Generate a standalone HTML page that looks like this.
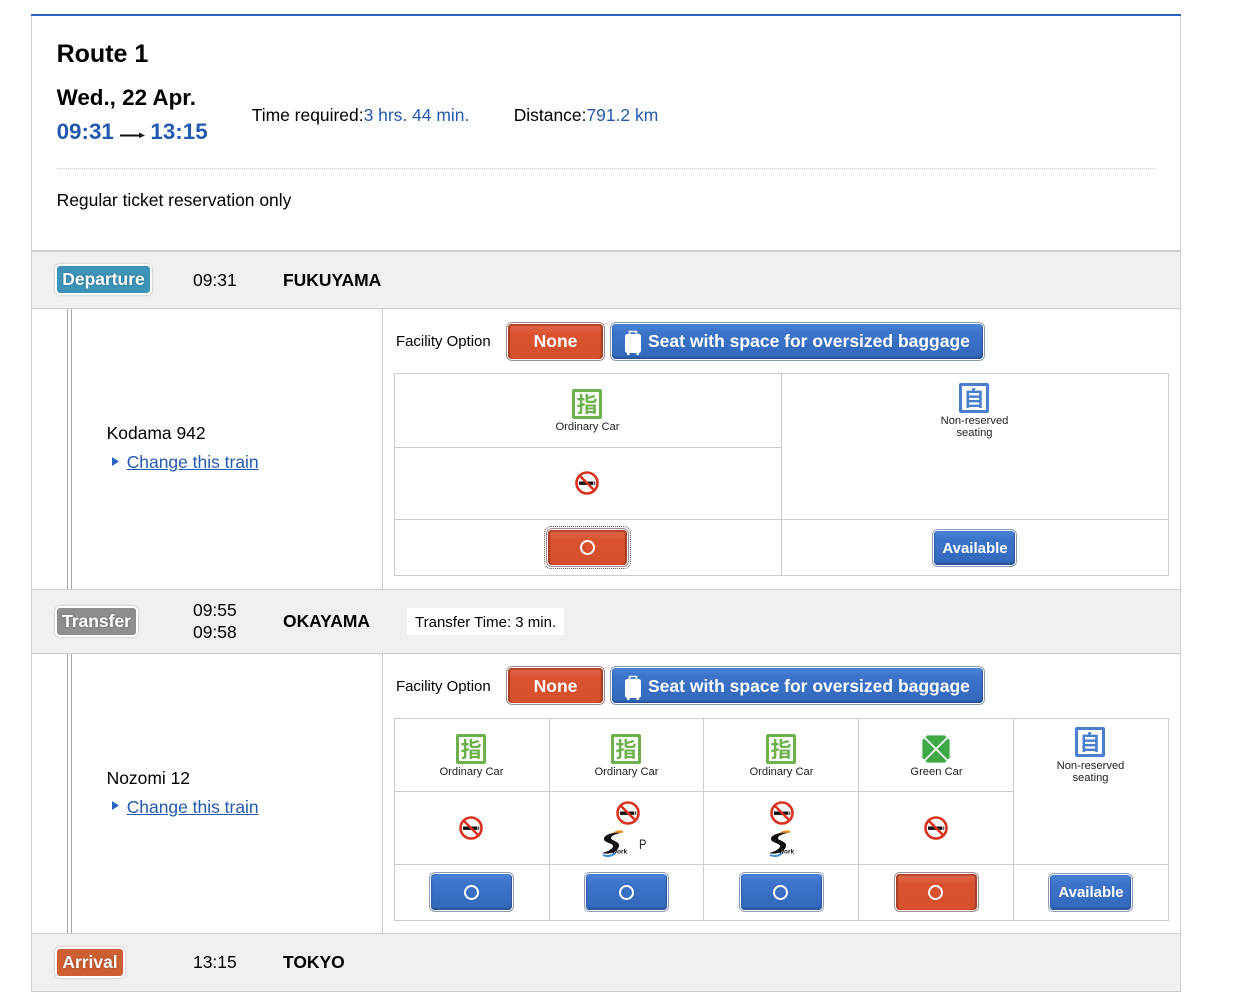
<!DOCTYPE html>
<html lang="en"><head><meta charset="utf-8"><title>Route 1</title>
<style>
html,body{margin:0;padding:0;background:#fff;width:1258px;height:1008px;overflow:hidden}
body{position:relative;font-family:"Liberation Sans","Noto Sans CJK JP",sans-serif;color:#000}
.a{position:absolute}
.t{position:absolute;white-space:nowrap;font-size:17.47px;line-height:22px}
.b{font-weight:bold}
.bl{color:#2459b0}
.line{position:absolute;background:#ccc}
.rail{position:absolute;background:#a8a8a8;width:1px}
.band{position:absolute;left:32px;width:1148px;background:#f0f0f0}
.badge{position:absolute;box-sizing:border-box;height:31px;border:2px solid #fff;border-radius:5px;color:#fff;font-weight:bold;font-size:17.47px;line-height:26px;text-align:center;box-shadow:0 0 2px rgba(0,0,0,.25);text-shadow:0 0 2px rgba(0,0,0,.3)}
.btn{position:absolute;box-sizing:border-box;border-radius:6px;border:1px solid #8a9bb5;padding:1px;background:#fff}
.btn>div{width:100%;height:100%;box-sizing:border-box;border-radius:4px;color:#fff;font-weight:bold;text-align:center;position:relative}
.btn.blue>div{background:linear-gradient(#4a82da,#3d74ca 25%,#3168bb);box-shadow:inset -1px -2px 1px #2a5598,inset 1px 0 1px #2f60ad}
.btn.red{border-color:#a08c88}
.btn.red>div{background:linear-gradient(#e2694d,#d9522f 30%,#d6502d);box-shadow:inset 2px 0 1px #a83d22,inset -2px 0 1px #a83d22,inset 0 2px 1px #b3492f}
.o{position:absolute;left:50%;top:50%;margin:-8px 0 0 -8px;border:2px solid #fff;border-radius:50%;box-sizing:content-box;width:11px;height:11px}
.cap{position:absolute;font-size:11.2px;line-height:12px;text-align:center;color:#222;white-space:nowrap;transform:translateX(-50%)}
.ic{position:absolute;box-sizing:border-box;width:30px;height:30px;border:3px solid;border-radius:2px;text-align:center;font-size:21px;font-weight:bold;line-height:24px;font-family:"Noto Sans CJK JP",sans-serif}
.g{color:#6db14d;border-color:#6db14d}
.n{color:#4a7fcf;border-color:#4a7fcf}
.bt{font-size:17.5px;line-height:35px}
.av{font-size:15px;line-height:35px}
</style></head><body>

<!-- outer frame -->
<div class="line" style="left:31px;top:14px;width:1px;height:978px"></div>
<div class="line" style="left:1180px;top:14px;width:1px;height:978px"></div>
<div class="a" style="left:31px;top:14px;width:1150px;height:2px;background:#2a62c0"></div>

<!-- header -->
<div class="t b" style="left:56.6px;top:39px;font-size:25px;line-height:30px">Route 1</div>
<div class="t b" style="left:56.6px;top:84px;font-size:22.4px;line-height:28px">Wed., 22 Apr.</div>
<div class="t b bl" style="left:56.6px;top:118px;font-size:22.4px;line-height:28px">09:31</div>
<svg class="a" style="left:120px;top:131px" width="25" height="8"><path d="M0 4.5H20" stroke="#111" stroke-width="2"/><path d="M19 1.5L25 4.5L19 7Z" fill="#111"/></svg>
<div class="t b bl" style="left:150.4px;top:118px;font-size:22.4px;line-height:28px">13:15</div>
<div class="t" style="left:251.7px;top:104px">Time required:<span class="bl">3 hrs. 44 min.</span></div>
<div class="t" style="left:513.7px;top:104px">Distance:<span class="bl">791.2 km</span></div>
<div class="a" style="left:57px;top:168px;width:1098px;border-top:1px dotted #ccc"></div>
<div class="t" style="left:56.6px;top:189px">Regular ticket reservation only</div>

<!-- departure band -->
<div class="band" style="top:250px;height:58px;border-top:2px solid #ccc;box-sizing:border-box"></div>
<div class="line" style="left:32px;top:308px;width:1148px;height:1px"></div>
<div class="badge" style="left:55px;top:264px;width:97px;background:#3d94b8">Departure</div>
<div class="t" style="left:193px;top:269px">09:31</div>
<div class="t b" style="left:283px;top:268.5px">FUKUYAMA</div>

<!-- section 1 -->
<div class="rail" style="left:67px;top:309px;height:280px"></div>
<div class="rail" style="left:71px;top:309px;height:280px"></div>
<div class="line" style="left:382px;top:309px;width:1px;height:280px"></div>
<div class="t" style="left:106.6px;top:422px">Kodama 942</div>
<svg class="a" style="left:112px;top:456px" width="8" height="11"><path d="M0 1L7 5.5L0 10Z" fill="#2a62c0"/></svg>
<div class="t bl" style="left:126.7px;top:451px;text-decoration:underline">Change this train</div>
<div class="t" style="left:396px;top:330.5px;font-size:14.95px">Facility Option</div>
<div class="btn red" style="left:506px;top:322px;width:99px;height:39px"><div class="bt">None</div></div>
<div class="btn blue" style="left:610px;top:322px;width:375px;height:39px"><div class="bt" style="text-align:left;padding-left:36px">Seat with space for oversized baggage</div></div>
<svg class="a" style="left:624px;top:330px" width="18" height="25"><path d="M5.5 4V1.5H12.5V4" fill="none" stroke="#fff" stroke-width="1.6"/><rect x="1" y="4" width="16" height="19" rx="2.5" fill="#fff"/><rect x="3" y="22" width="2.5" height="3" fill="#fff"/><rect x="12.5" y="22" width="2.5" height="3" fill="#fff"/></svg>

<!-- table 1 -->
<div class="a" style="left:394px;top:373px;width:773px;height:201px;border:1px solid #ccc"></div>
<div class="line" style="left:781px;top:373px;width:1px;height:202px"></div>
<div class="line" style="left:395px;top:447px;width:386px;height:1px"></div>
<div class="line" style="left:395px;top:519px;width:773px;height:1px"></div>
<div class="ic g" style="left:572px;top:389px">指</div>
<div class="cap" style="left:587.5px;top:421px">Ordinary Car</div>
<div class="ic n" style="left:959px;top:383px">自</div>
<div class="cap" style="left:974.5px;top:415px">Non-reserved<br>seating</div>
<svg class="a" style="left:575px;top:471px" width="24" height="24"><use href="#ns"/></svg>
<div class="a" style="left:544px;top:526px;width:85px;height:41px;border:1px dotted #555;border-radius:7px"></div>
<div class="btn red" style="left:546px;top:528px;width:83px;height:39px"><div><span class="o" style="margin-top:-7.5px"></span></div></div>
<div class="btn blue" style="left:932px;top:529px;width:85px;height:38px"><div class="av" style="padding-left:1px">Available</div></div>

<!-- transfer band -->
<div class="line" style="left:32px;top:589px;width:1148px;height:1px"></div>
<div class="band" style="top:590px;height:63px"></div>
<div class="line" style="left:32px;top:653px;width:1148px;height:1px"></div>
<div class="badge" style="left:55px;top:606px;width:83px;background:#8e8e8e">Transfer</div>
<div class="t" style="left:193px;top:599px">09:55</div>
<div class="t" style="left:193px;top:621px">09:58</div>
<div class="t b" style="left:283px;top:610px">OKAYAMA</div>
<div class="a" style="left:407px;top:608px;width:157px;height:27px;background:#fff;border-radius:2px"></div>
<div class="t" style="left:415px;top:611.5px;font-size:15px">Transfer Time: 3 min.</div>

<!-- section 2 -->
<div class="rail" style="left:67px;top:654px;height:279px"></div>
<div class="rail" style="left:71px;top:654px;height:279px"></div>
<div class="line" style="left:382px;top:654px;width:1px;height:279px"></div>
<div class="t" style="left:106.6px;top:767px">Nozomi 12</div>
<svg class="a" style="left:112px;top:800px" width="8" height="11"><path d="M0 1L7 5.5L0 10Z" fill="#2a62c0"/></svg>
<div class="t bl" style="left:126.7px;top:796px;text-decoration:underline">Change this train</div>
<div class="t" style="left:396px;top:676px;font-size:14.95px">Facility Option</div>
<div class="btn red" style="left:506px;top:666px;width:99px;height:39px"><div class="bt" style="line-height:37px">None</div></div>
<div class="btn blue" style="left:610px;top:666px;width:375px;height:39px"><div class="bt" style="line-height:37px;text-align:left;padding-left:36px">Seat with space for oversized baggage</div></div>
<svg class="a" style="left:624px;top:675px" width="18" height="25"><path d="M5.5 4V1.5H12.5V4" fill="none" stroke="#fff" stroke-width="1.6"/><rect x="1" y="4" width="16" height="19" rx="2.5" fill="#fff"/><rect x="3" y="22" width="2.5" height="3" fill="#fff"/><rect x="12.5" y="22" width="2.5" height="3" fill="#fff"/></svg>

<!-- table 2 -->
<div class="a" style="left:394px;top:718px;width:773px;height:201px;border:1px solid #ccc"></div>
<div class="line" style="left:549px;top:718px;width:1px;height:202px"></div>
<div class="line" style="left:703px;top:718px;width:1px;height:202px"></div>
<div class="line" style="left:858px;top:718px;width:1px;height:202px"></div>
<div class="line" style="left:1013px;top:718px;width:1px;height:202px"></div>
<div class="line" style="left:395px;top:791px;width:618px;height:1px"></div>
<div class="line" style="left:395px;top:864px;width:773px;height:1px"></div>

<div class="ic g" style="left:456px;top:734px">指</div>
<div class="cap" style="left:471.5px;top:766px">Ordinary Car</div>
<div class="ic g" style="left:611px;top:734px">指</div>
<div class="cap" style="left:626.5px;top:766px">Ordinary Car</div>
<div class="ic g" style="left:766px;top:734px">指</div>
<div class="cap" style="left:781.5px;top:766px">Ordinary Car</div>
<svg class="a" style="left:921px;top:734px" width="30" height="30"><path d="M6 1H24L29 6V24L24 29H6L1 24V6Z" fill="#3fa847" stroke="#e2f2e2" stroke-width="1"/><path d="M3 3L27 27M27 3L3 27" stroke="#fff" stroke-width="1.8"/></svg>
<div class="cap" style="left:936.5px;top:766px">Green Car</div>
<div class="ic n" style="left:1075px;top:727px">自</div>
<div class="cap" style="left:1090.5px;top:760px">Non-reserved<br>seating</div>

<svg width="0" height="0" style="position:absolute"><defs>
<g id="ns"><circle cx="12" cy="12" r="10.5" fill="#fff" stroke="#d9321f" stroke-width="2.6"/><rect x="4" y="10.5" width="14" height="3.4" fill="#111"/><rect x="18.5" y="10.5" width="1.8" height="3.4" fill="#555"/><path d="M4.5 4.5L19.5 19.5" stroke="#d9321f" stroke-width="2.6"/></g>
<g id="sw"><path d="M3 25C8 27 12 26 15 23" fill="none" stroke="#3f8fd8" stroke-width="2"/><path d="M12 5C15 2 19 1 23 2" fill="none" stroke="#ee8f1f" stroke-width="2.4"/><path d="M21 3C12 2 4 5 4 9C4 13 13 13 13 16C13 19 7 22 2 23C9 25 18 22 19 16C20 11 11 11 11 8C11 6 15 4 21 3Z" fill="#111"/><text x="12" y="23.5" font-family="Liberation Sans,sans-serif" font-size="6.5" font-weight="bold" fill="#111">work</text></g>
</defs></svg>
<svg class="a" style="left:459px;top:816px" width="24" height="24"><use href="#ns"/></svg>
<svg class="a" style="left:616px;top:801px" width="24" height="24"><use href="#ns"/></svg>
<svg class="a" style="left:770px;top:801px" width="24" height="24"><use href="#ns"/></svg>
<svg class="a" style="left:924px;top:816px" width="24" height="24"><use href="#ns"/></svg>
<svg class="a" style="left:600px;top:830px" width="28" height="27"><use href="#sw"/></svg>
<div class="t" style="left:638.5px;top:837px;font-size:14px;line-height:14px;color:#222;transform:scaleX(.8);transform-origin:0 0">P</div>
<svg class="a" style="left:767px;top:830px" width="28" height="27"><use href="#sw"/></svg>

<div class="btn blue" style="left:429px;top:872px;width:85px;height:40px"><div><span class="o" style="margin-top:-7px;margin-left:-7.5px"></span></div></div>
<div class="btn blue" style="left:584px;top:872px;width:85px;height:40px"><div><span class="o" style="margin-top:-7px;margin-left:-7.5px"></span></div></div>
<div class="btn blue" style="left:739px;top:872px;width:85px;height:40px"><div><span class="o" style="margin-top:-7px;margin-left:-9px"></span></div></div>
<div class="btn red" style="left:894px;top:872px;width:85px;height:40px"><div><span class="o" style="margin-top:-7px;margin-left:-9px"></span></div></div>
<div class="btn blue" style="left:1048px;top:873px;width:85px;height:39px"><div class="av" style="line-height:36px;padding-left:1px">Available</div></div>

<!-- arrival band -->
<div class="line" style="left:32px;top:933px;width:1148px;height:1px"></div>
<div class="band" style="top:934px;height:57px"></div>
<div class="line" style="left:31px;top:991px;width:1150px;height:1px"></div>
<div class="badge" style="left:55px;top:947px;width:70px;background:#cd5f33">Arrival</div>
<div class="t" style="left:193px;top:951px">13:15</div>
<div class="t b" style="left:283px;top:951px">TOKYO</div>
</body></html>
